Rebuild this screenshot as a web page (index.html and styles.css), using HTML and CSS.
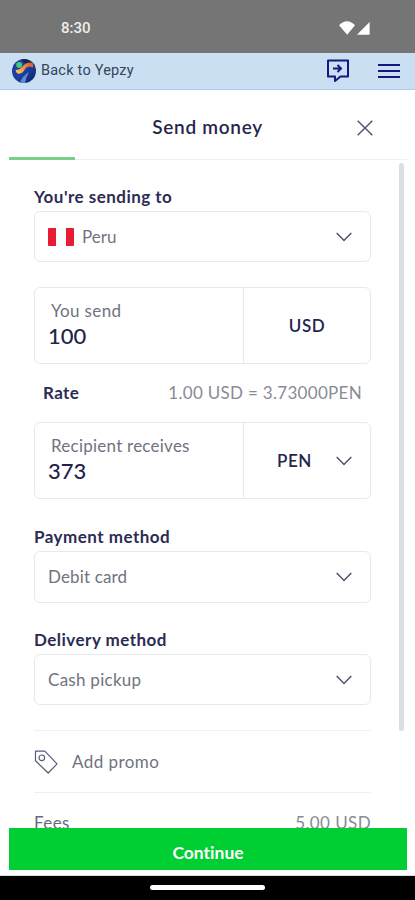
FILE: index.html
```html
<!DOCTYPE html>
<html lang="en">
<head>
<meta charset="utf-8">
<title>Send money</title>
<link rel="stylesheet" href="styles.css">
</head>
<body>
<div class="status">
  <span class="clock">8:30</span>
  <svg class="signals" width="32" height="14" viewBox="0 0 32 14" fill="#fff"><path d="M0 4.2Q8-3.8 16 4.2L8.2 13.7Z"/><path d="M18 13.7L30.6 1V13.7Z"/></svg>
</div>
<header class="appbar">
  <svg class="logo" width="24" height="24" viewBox="0 0 24 24">
    <defs>
      <linearGradient id="sea" x1="0" y1="0" x2="1" y2="1"><stop offset="0" stop-color="#273c9b"/><stop offset=".5" stop-color="#1c3fa8"/><stop offset="1" stop-color="#142153"/></linearGradient>
      <linearGradient id="sun" x1="0" y1="1" x2="1" y2="0"><stop offset="0" stop-color="#f5d255"/><stop offset=".55" stop-color="#f08a3e"/><stop offset="1" stop-color="#d95028"/></linearGradient>
      <clipPath id="globe"><circle cx="12" cy="12" r="12"/></clipPath>
    </defs>
    <g clip-path="url(#globe)">
      <rect width="24" height="24" fill="url(#sea)"/>
      <path d="M9 0H24V8L20 5L12 4Z" fill="#1b2650"/>
      <path d="M8 24Q10 17 17 13Q14 18 13 24Z" fill="#5c8ae0"/>
      <path d="M3.5 11Q5 16 8 14.5Q11 14 13 10Q16 6 21 8.500L21.500 4Q15 2 11 7Q8 11 3.500 11Z" fill="url(#sun)"/>
      <circle cx="7.2" cy="6" r="3" fill="#46c878"/>
    </g>
  </svg>
  <span class="back">Back to Yepzy</span>
  <svg class="chat" width="24" height="24" viewBox="0 0 24 24" fill="none" stroke="#17177f" stroke-width="2"><path d="M2 1.5H22V17.5H14.500L9 22V17.500H2Z" stroke-linejoin="round"/><path d="M7 9.5H15M11.5 6L15 9.5L11.5 13"/></svg>
  <svg class="menu" width="22" height="16" viewBox="0 0 22 16" stroke="#17177f" stroke-width="2"><path d="M0 2H22M0 8H22M0 14H22"/></svg>
</header>
<main class="sheet">
  <div class="title-row">
    <h1><span class="t-title">Send money</span></h1>
    <svg class="close" width="16" height="16" viewBox="0 0 16 16" fill="none" stroke="#4b5070" stroke-width="1.4"><path d="M.7.7L15.3 15.3M15.3.7L.7 15.3"/></svg>
  </div>
  <div class="progress"><div class="progress-done"></div></div>
  <div class="scroller">
    <div class="form">
      <div class="label first"><span class="t-sending">You're sending to</span></div>
      <div class="select country">
        <span class="flag"></span><span class="t-peru">Peru</span>
        <svg class="chevron" width="16" height="10" viewBox="0 0 16 10"><path d="M.7 1L8 8.5L15.3 1"/></svg>
      </div>
      <div class="amount">
        <div class="entry"><span class="caption t-send">You send</span><span class="value">100</span></div>
        <div class="currency usd">USD</div>
      </div>
      <div class="rate"><span class="rate-name">Rate</span><span class="t-rate">1.00 USD = 3.73000PEN</span></div>
      <div class="amount receive">
        <div class="entry"><span class="caption t-receive">Recipient receives</span><span class="value">373</span></div>
        <div class="currency pen">PEN<svg class="chevron" width="16" height="10" viewBox="0 0 16 10"><path d="M.7 1L8 8.5L15.3 1"/></svg></div>
      </div>
      <div class="label payment"><span class="t-payment">Payment method</span></div>
      <div class="select tall"><span class="t-debit">Debit card</span><svg class="chevron" width="16" height="10" viewBox="0 0 16 10"><path d="M.7 1L8 8.5L15.3 1"/></svg></div>
      <div class="label"><span class="t-delivery">Delivery method</span></div>
      <div class="select"><span class="t-cash">Cash pickup</span><svg class="chevron" width="16" height="10" viewBox="0 0 16 10"><path d="M.7 1L8 8.5L15.3 1"/></svg></div>
      <div class="promo">
        <svg width="24" height="24" viewBox="0 0 24 24" fill="none" stroke="#555a78" stroke-width="1.2" stroke-linejoin="round"><path d="M1.5 1.2H10.8L23 13.8L14.2 23L1.5 10.8Z"/><circle cx="7.8" cy="7.8" r="2.8"/></svg>
        <span class="t-promo">Add promo</span>
      </div>
      <div class="fees"><span class="t-fees">Fees</span><span class="t-five">5.00 USD</span></div>
    </div>
    <div class="scrollbar"></div>
  </div>
  <button class="continue"><span class="t-continue">Continue</span></button>
</main>
<div class="navbar"><div class="handle"></div></div>
</body>
</html>
```

FILE: styles.css
```css
* { box-sizing: border-box; }
body {
  margin: 0;
  width: 415px;
  height: 900px;
  overflow: hidden;
  display: flex;
  flex-direction: column;
  background: #fff;
  color: #70737f;
  font: 17px/20px Lato, "Liberation Sans", sans-serif;
  font-variant-ligatures: none;
  white-space: nowrap;
}
svg { flex: none; display: block; }
.status {
  height: 53px;
  flex: none;
  display: flex;
  justify-content: space-between;
  padding: 18px 44px 0 61px;
  background: #757575;
}
.clock { color: #eee; font: 500 15px/21px Roboto, sans-serif; }
.signals { margin-top: 3px; }
.appbar {
  height: 37px;
  flex: none;
  display: flex;
  align-items: center;
  padding: 0 15px 1px 12px;
  background: #cbdff3;
  border-bottom: 1px solid #abcdf5;
}
.back { margin-left: 5px; color: #34445c; font: 14.5px/20px Roboto, sans-serif; letter-spacing: .22px; }
.chat { margin-left: auto; }
.menu { margin-left: 28px; margin-top: 1px; }
.sheet { height: 786px; flex: none; display: flex; flex-direction: column; border-bottom: 1px solid #ddd; }
.title-row { height: 67px; flex: none; display: grid; grid-template-columns: 1fr 42px; align-items: center; padding: 9px 16px 0 58px; }
h1 { margin: 0; text-align: center; font-size: 19px; line-height: 24px; font-weight: 600; color: #25264d; }
.t-title { position: relative; top: -1px; letter-spacing: .7px; }
.progress { height: 3px; flex: none; margin: 0 8px 0 9px; border-bottom: 1px solid #f0f0f2; }
.progress-done { width: 66px; height: 3px; background: #7acf86; }
.scroller { height: 668px; flex: none; display: flex; overflow: hidden; }
.form { width: 337px; margin-left: 34px; flex: none; display: flex; flex-direction: column; }
.scrollbar { width: 5px; height: 568px; margin: 3px 0 0 28px; background: #dcdee1; border-radius: 3px; }
.label { height: 20px; flex: none; margin-top: 27px; margin-bottom: 4px; color: #2b2c54; font-weight: 700; letter-spacing: .48px; }
.select { height: 51px; flex: none; display: flex; align-items: center; padding: 0 18px 0 13px; border: 1px solid #e9e9ec; border-radius: 6px; }
.select.tall { height: 52px; }
.label.payment { margin-top: 28px; }
.chevron { margin-left: auto; fill: none; stroke: #50536c; stroke-width: 1.5; }
.flag { width: 26px; height: 18px; margin: 0 8px 0 0; border: solid #e91b32; border-width: 0 8.5px; border-radius: 1px; background: #fafafa; }
.amount { height: 77px; flex: none; display: flex; margin-top: 25px; border: 1px solid #e9e9ec; border-radius: 6px; }
.entry { width: 209px; padding: 13px 0 0 13px; border-right: 1px solid #e9e9ec; display: flex; flex-direction: column; align-items: flex-start; }
.caption { margin-left: 3px; }
.value { margin-top: 2px; color: #22234a; font-size: 22px; line-height: 25px; font-weight: 500; }
.currency { flex: 1; display: flex; align-items: center; color: #25264d; font-weight: 600; letter-spacing: .5px; }
.usd { justify-content: center; }
.pen { padding: 0 18px 0 33px; }
.rate { height: 58px; flex: none; display: flex; align-items: center; justify-content: space-between; padding: 0 9px; color: #898b95; }
.rate-name { color: #2b2c54; font-weight: 700; letter-spacing: .4px; }
.t-rate { letter-spacing: .3px; }
.t-send { letter-spacing: .35px; }
.t-receive { letter-spacing: .24px; }
.t-debit { letter-spacing: .15px; }
.t-cash { letter-spacing: .27px; }
.t-promo { letter-spacing: .45px; }
.receive { margin-top: 0; }
.promo { height: 63px; flex: none; margin-top: 25px; display: flex; align-items: center; gap: 14px; border-top: 1px solid #f0f0f2; border-bottom: 1px solid #f0f0f2; }
.fees { display: flex; justify-content: space-between; margin-top: 20px; color: #666a80; letter-spacing: .4px; }
.t-five { color: #898b95; }
.continue { width: 398px; height: 42px; flex: none; margin-left: 9px; padding: 8px 0 0; border: 0; background: #00cf34; color: #fff; font: 700 17.5px/24px Lato, sans-serif; font-variant-ligatures: none; }
.navbar { height: 24px; flex: none; background: #000; padding-top: 9px; }
.handle { width: 115px; height: 5px; margin: 0 auto; border-radius: 3px; background: #fff; }
```
